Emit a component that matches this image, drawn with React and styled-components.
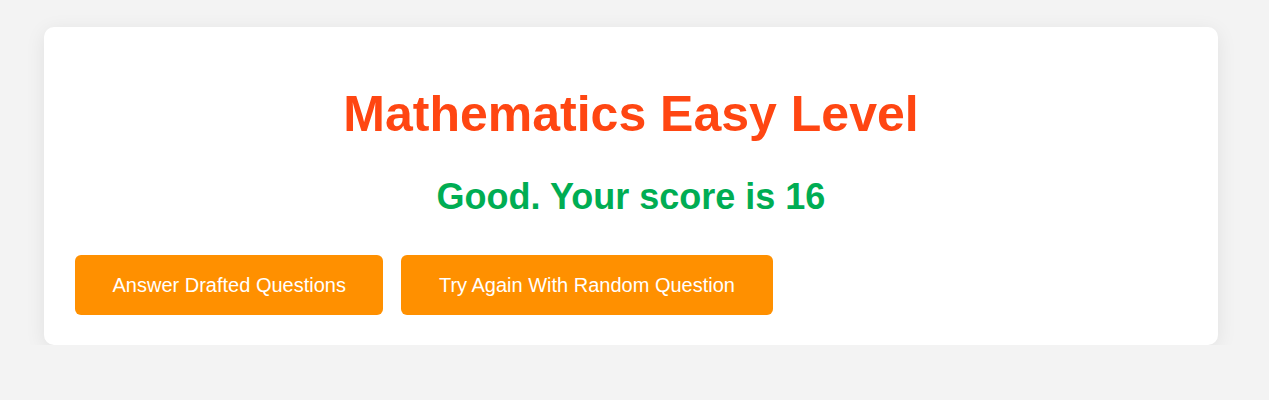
import React from "react";
import styled, { createGlobalStyle } from "styled-components";

const GlobalStyle = createGlobalStyle`
  body {
    margin: 0;
    background: #f3f3f3;
    font-family: "Liberation Sans", Arial, sans-serif;
  }
`;

const Page = styled.main`
  padding: 27px 0 0 44px;
`;

const Card = styled.section`
  width: 1174px;
  box-sizing: border-box;
  background: #fff;
  border-radius: 10px;
  box-shadow: 0 4px 20px rgba(0, 0, 0, 0.08);
  padding: 59px 31px 30px;
`;

const Title = styled.h1`
  margin: 0 0 35px;
  text-align: center;
  font-size: 50px;
  line-height: 56px;
  font-weight: 700;
  color: #ff4612;
`;

const Score = styled.h2`
  margin: 0 0 38px;
  text-align: center;
  font-size: 36px;
  line-height: 40px;
  font-weight: 700;
  color: #00ad53;
`;

const Actions = styled.div`
  display: flex;
  gap: 18px;
`;

const Button = styled.button`
  height: 60px;
  padding: 0 37.5px;
  border: none;
  border-radius: 6px;
  background: #ff9000;
  color: #fff;
  font-family: "Liberation Sans", Arial, sans-serif;
  font-size: 20px;
  cursor: pointer;
`;

const App = () => {
  return (
    <Page>
      <GlobalStyle />
      <Card>
        <Title>Mathematics Easy Level</Title>
        <Score>Good. Your score is 16</Score>
        <Actions>
          <Button>Answer Drafted Questions</Button>
          <Button>Try Again With Random Question</Button>
        </Actions>
      </Card>
    </Page>
  );
};

export default App;
